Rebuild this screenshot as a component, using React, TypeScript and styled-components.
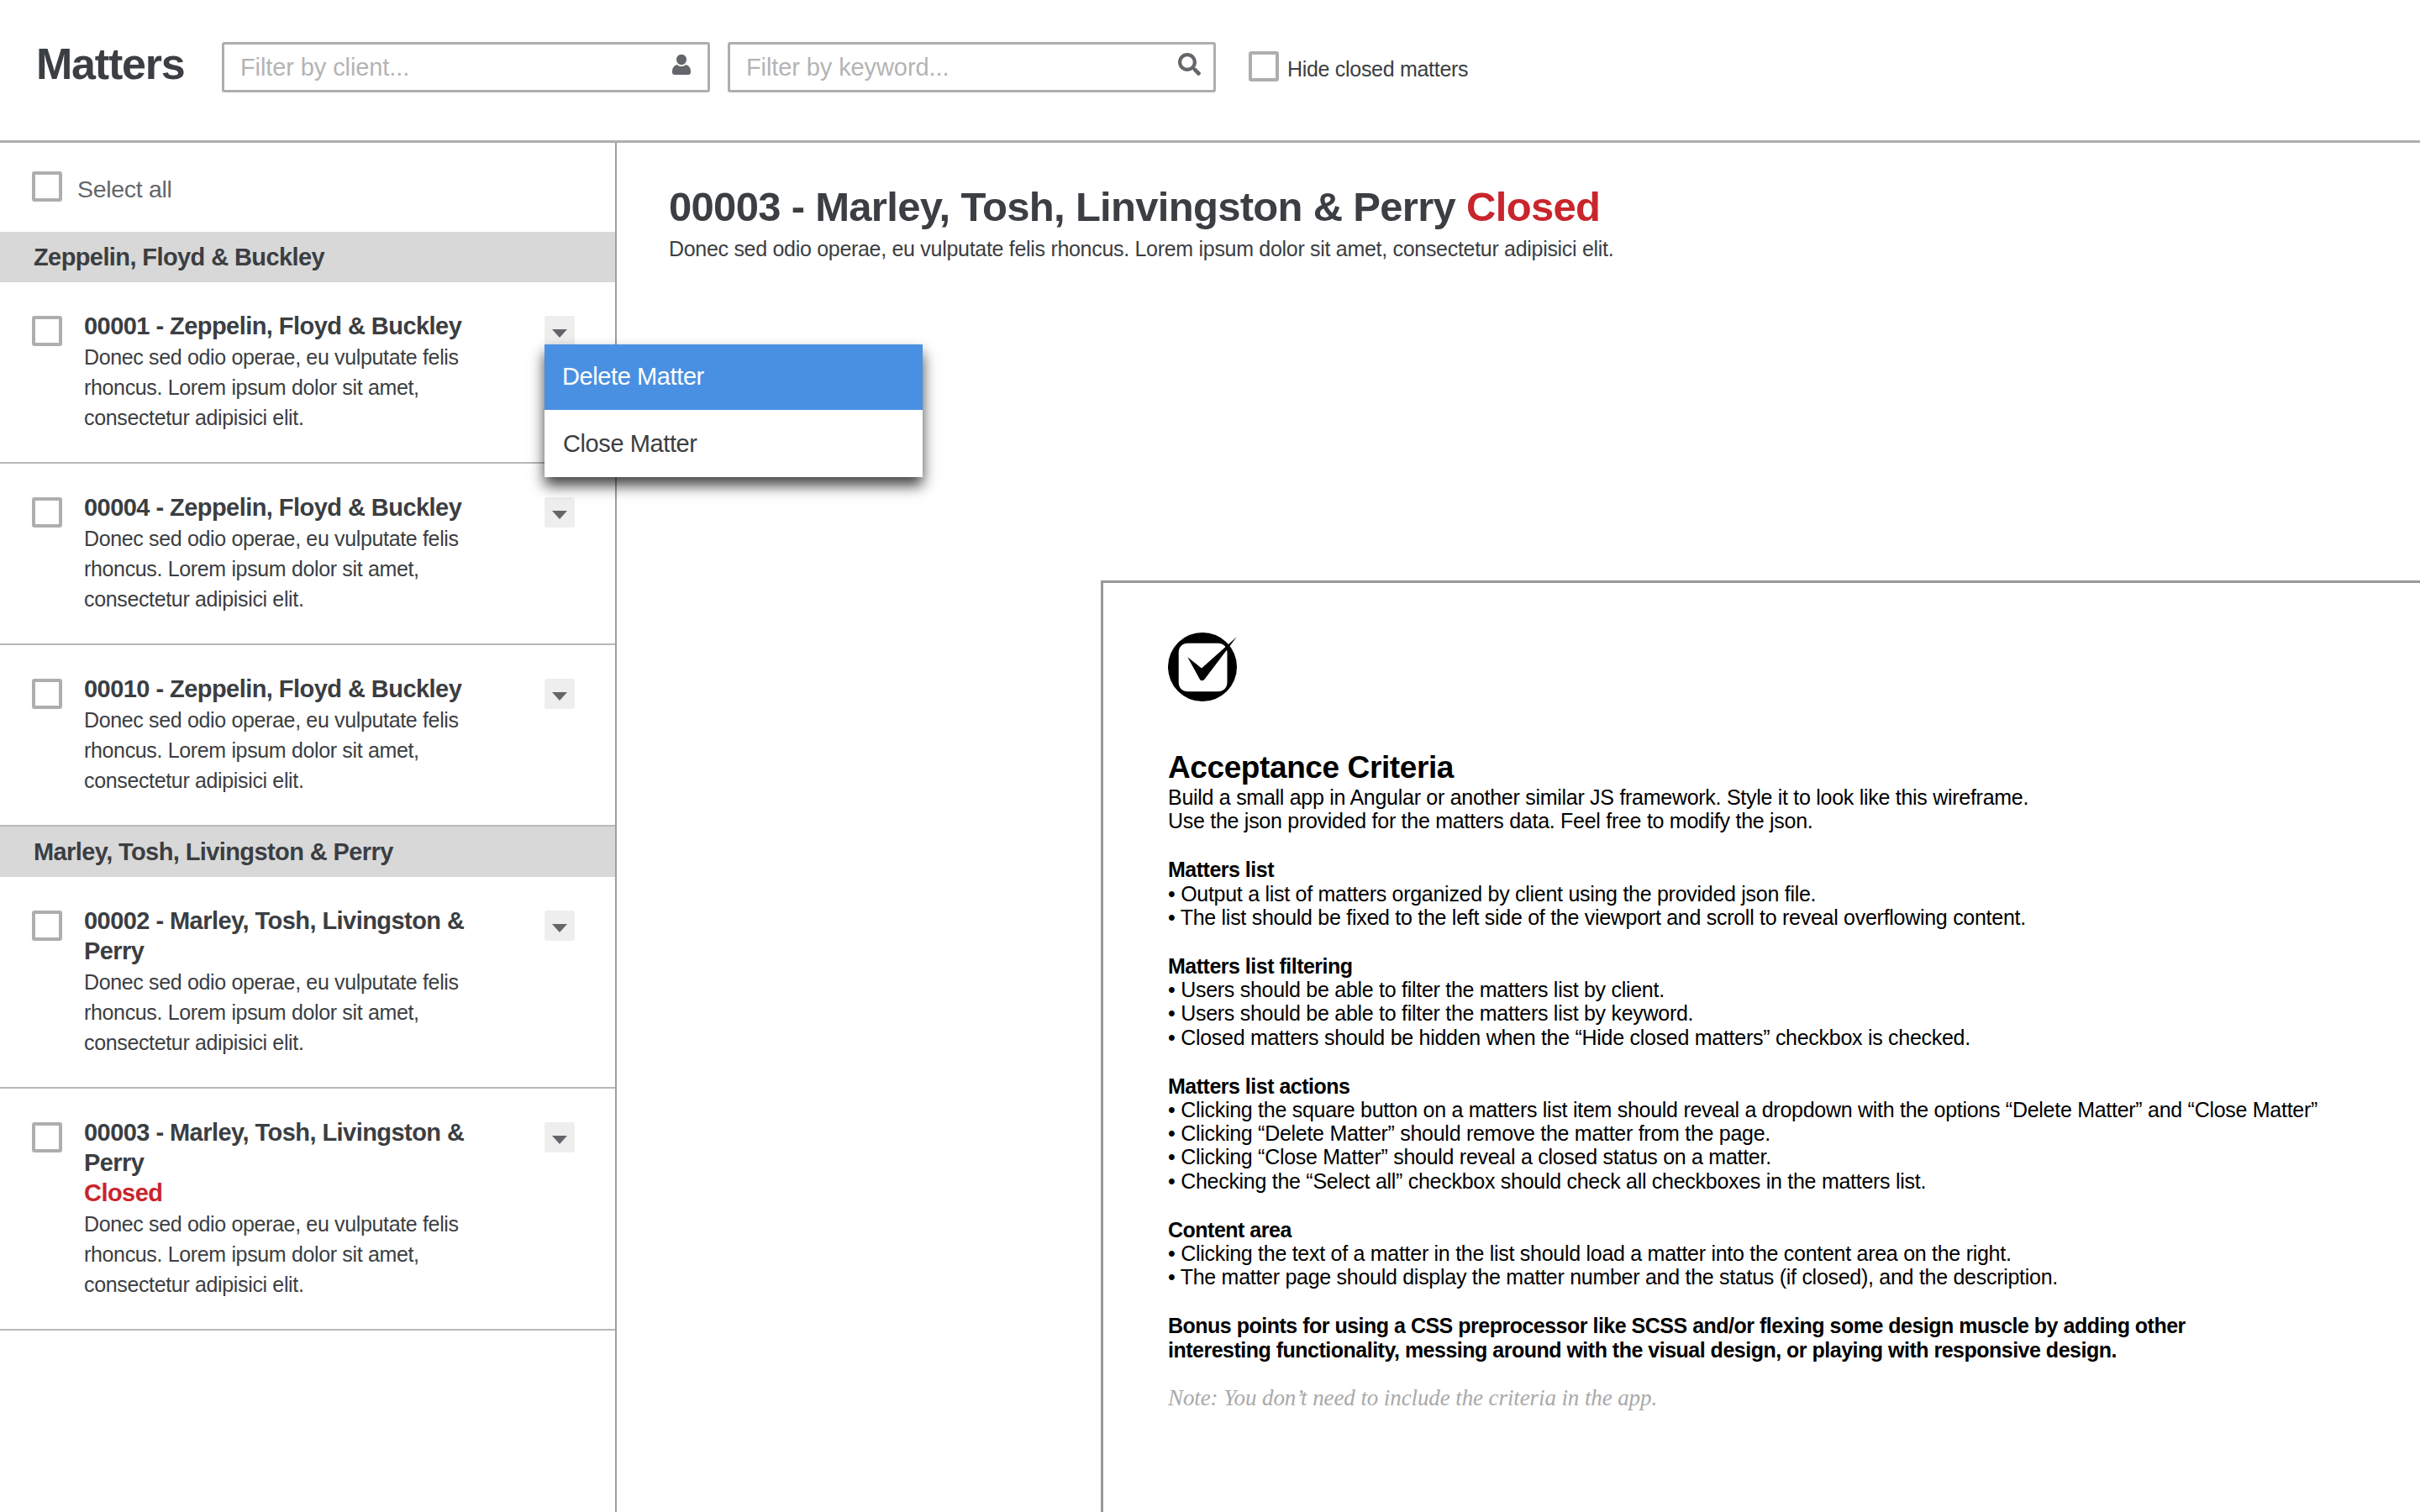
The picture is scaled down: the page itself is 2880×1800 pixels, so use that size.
import { createGlobalStyle } from "styled-components";
import styled from "styled-components";
import { FaSearch } from "react-icons/fa";

const GlobalStyle = createGlobalStyle`
  html, body { margin: 0; padding: 0; background: #fff; }
  body { font-family: "Liberation Sans", Arial, sans-serif; color: #3b3e42; }
  * { box-sizing: border-box; }
`;

type Matter = { id: string; name: string; closed?: boolean };
type Group = { client: string; matters: Matter[] };

const GROUPS: Group[] = [
  {
    client: "Zeppelin, Floyd & Buckley",
    matters: [
      { id: "00001", name: "Zeppelin, Floyd & Buckley" },
      { id: "00004", name: "Zeppelin, Floyd & Buckley" },
      { id: "00010", name: "Zeppelin, Floyd & Buckley" },
    ],
  },
  {
    client: "Marley, Tosh, Livingston & Perry",
    matters: [
      { id: "00002", name: "Marley, Tosh, Livingston & Perry" },
      { id: "00003", name: "Marley, Tosh, Livingston & Perry", closed: true },
    ],
  },
];

const CRITERIA = [
  {
    title: "Matters list",
    lines: [
      "• Output a list of matters organized by client using the provided json file.",
      "• The list should be fixed to the left side of the viewport and scroll to reveal overflowing content.",
    ],
  },
  {
    title: "Matters list filtering",
    lines: [
      "• Users should be able to filter the matters list by client.",
      "• Users should be able to filter the matters list by keyword.",
      "• Closed matters should be hidden when the “Hide closed matters” checkbox is checked.",
    ],
  },
  {
    title: "Matters list actions",
    lines: [
      "• Clicking the square button on a matters list item should reveal a dropdown with the options “Delete Matter” and “Close Matter”",
      "• Clicking “Delete Matter” should remove the matter from the page.",
      "• Clicking “Close Matter” should reveal a closed status on a matter.",
      "• Checking the “Select all” checkbox should check all checkboxes in the matters list.",
    ],
  },
  {
    title: "Content area",
    lines: [
      "• Clicking the text of a matter in the list should load a matter into the content area on the right.",
      "• The matter page should display the matter number and the status (if closed), and the description.",
    ],
  },
];

const Page = styled.div`
  width: 2880px;
  height: 1800px;
  overflow: hidden;
  display: flex;
  flex-direction: column;
`;

const Toolbar = styled.header`
  height: 170px;
  flex: none;
  display: flex;
  align-items: center;
  padding: 0 0 0 43px;
  border-bottom: 3px solid #aeaeae;
`;

const PageTitle = styled.h1`
  margin: 0 45px 16px 0;
  width: 176px;
  font-size: 52px;
  font-weight: 700;
  letter-spacing: -1.2px;
  white-space: nowrap;
`;

const FilterBox = styled.div`
  width: 581px;
  height: 60px;
  margin-right: 21px;
  margin-bottom: 8px;
  padding: 0 15px 0 19px;
  display: flex;
  align-items: center;
  justify-content: space-between;
  border: 3px solid #aeaeae;
  border-radius: 3px;
`;

const FilterText = styled.span`
  padding-top: 2px;
  font-size: 29px;
  letter-spacing: -0.1px;
  color: #b4b4b4;
`;

const IconSlot = styled.span<{ $inset?: number }>`
  display: flex;
  margin-bottom: 6px;
  margin-right: ${(p) => p.$inset ?? 0}px;
  color: #63666a;
`;

const Check = styled.span`
  flex: none;
  display: block;
  width: 36px;
  height: 36px;
  border: 4px solid #aeaeae;
  border-radius: 3px;
  background: #fff;
`;

const HideLabel = styled.label`
  margin: 0 0 10px 18px;
  display: flex;
  align-items: center;
  gap: 10px;
  font-size: 25px;
  letter-spacing: -0.3px;
`;

const HideText = styled.span`
  margin-top: 7px;
`;

const Body = styled.div`
  flex: 1;
  min-height: 0;
  display: flex;
`;

const Sidebar = styled.aside`
  width: 734px;
  flex: none;
  border-right: 2px solid #9e9e9e;
`;

const SelectAll = styled.label`
  height: 106px;
  padding: 0 0 2px 38px;
  display: flex;
  align-items: center;
  gap: 18px;
  font-size: 28.5px;
  letter-spacing: -0.3px;
  color: #63666a;
`;

const SelectText = styled.span`
  margin-top: 6px;
`;

const GroupHeader = styled.h2`
  height: 60px;
  margin: 0;
  padding: 0 0 0 40px;
  display: flex;
  align-items: center;
  background: #d8d8d8;
  font-size: 29px;
  font-weight: 700;
  letter-spacing: -0.6px;
`;

const Item = styled.article`
  position: relative;
  display: flex;
  padding: 34px 0 35px 38px;
  border-bottom: 2px solid #b8b8b8;
`;

const ItemCheck = styled(Check)`
  margin-top: 6px;
`;

const ItemText = styled.div`
  width: 490px;
  margin-left: 26px;
`;

const ItemTitle = styled.div`
  font-size: 29px;
  line-height: 36px;
  font-weight: 700;
  letter-spacing: -0.55px;
`;

const Closed = styled.span`
  color: #c9252c;
`;

const ClosedLine = styled(Closed)`
  display: block;
`;

const ItemDesc = styled.p`
  margin: 0;
  padding-top: 1px;
  font-size: 25px;
  line-height: 36px;
  letter-spacing: -0.35px;
`;

const MenuButton = styled.span`
  flex: none;
  width: 36px;
  height: 36px;
  margin: 6px 0 0 58px;
  display: flex;
  align-items: center;
  justify-content: center;
  background: #eee;
  border-radius: 3px;
  &::after {
    content: "";
    margin-top: 6px;
    border-style: solid;
    border-width: 10px 9px 0;
    border-color: #63666a transparent transparent;
  }
`;

const Dropdown = styled.div`
  position: absolute;
  z-index: 2;
  top: 74px;
  left: 648px;
  width: 450px;
  background: #fff;
  box-shadow: 0 10px 16px rgba(0, 0, 0, 0.75);
`;

const DropdownItem = styled.div<{ $active?: boolean }>`
  height: ${(p) => (p.$active ? "78px" : "80px")};
  padding: ${(p) => (p.$active ? "0 0 2px 21px" : "0 0 0 22px")};
  display: flex;
  align-items: center;
  font-size: 29px;
  letter-spacing: -0.4px;
  background: ${(p) => (p.$active ? "#4a90e2" : "#fff")};
  color: ${(p) => (p.$active ? "#fff" : "#3b3e42")};
`;

const Main = styled.main`
  flex: 1;
  min-width: 0;
  display: flex;
  flex-direction: column;
  padding-top: 46px;
`;

const MatterHead = styled.div`
  padding-left: 62px;
  height: 475px;
`;

const MatterTitle = styled.h2`
  margin: 0;
  font-size: 49px;
  line-height: 60px;
  font-weight: 700;
  letter-spacing: -0.7px;
  white-space: nowrap;
`;

const MatterDesc = styled.p`
  margin: 3px 0 0;
  font-size: 25px;
  line-height: 34px;
  letter-spacing: -0.3px;
  white-space: nowrap;
`;

const Brief = styled.section`
  flex: 1;
  margin-left: 576px;
  padding: 59px 0 0 77px;
  border-top: 3px solid #999;
  border-left: 3px solid #999;
  color: #000;
`;

const Logo = styled.svg`
  display: block;
  width: 84px;
  height: 84px;
`;

const BriefTitle = styled.h3`
  margin: 56px 0 0;
  font-size: 37px;
  line-height: 42px;
  font-weight: 700;
  letter-spacing: -0.4px;
`;

const BriefLine = styled.div`
  font-size: 25px;
  line-height: 28.2px;
  letter-spacing: -0.28px;
  white-space: nowrap;
`;

const BriefBlock = styled.div`
  margin-bottom: 30px;
`;

const BonusBlock = styled.div`
  margin-bottom: 26px;
`;

const BriefStrong = styled(BriefLine)`
  font-weight: 700;
  letter-spacing: -0.5px;
`;

const BriefNote = styled.div`
  font-family: "Liberation Serif", "Times New Roman", serif;
  font-style: italic;
  font-size: 27px;
  line-height: 34px;
  letter-spacing: -0.1px;
  color: #a9a9a9;
`;

const UserIcon = () => (
  <svg width="22" height="24" viewBox="0 0 22 24" fill="currentColor" aria-hidden="true">
    <ellipse cx="11" cy="6" rx="6" ry="6.2" />
    <path d="M0 20c0-4 2-7 6-8 1 1.5 3 2 5 2s4-.5 5-2c4 1 6 4 6 8v1c0 2-1 3-3 3H3c-2 0-3-1-3-3z" />
  </svg>
);

const LogoMark = () => (
  <Logo viewBox="0 0 84 84" aria-hidden="true">
    <path
      fillRule="evenodd"
      d="M41 0a41 41 0 1 0 0 82a41 41 0 1 0 0-82zM24 12.7H59C66 12.7 70.5 17 70.5 24V59C70.5 66 66 70.3 59 70.3H24C17 70.3 12.7 66 12.7 59V24C12.7 17 17 12.7 24 12.7z"
    />
    <path d="M23.3 29.3L40 42.5 81.7 5.3 44 55C42 58 38.5 58 37.5 55z" />
  </Logo>
);

const MatterRow = ({ matter, open }: { matter: Matter; open?: boolean }) => (
  <Item>
    <ItemCheck />
    <ItemText>
      <ItemTitle>
        {`${matter.id} - ${matter.name}`}
        {matter.closed && <ClosedLine>Closed</ClosedLine>}
      </ItemTitle>
      <ItemDesc>
        Donec sed odio operae, eu vulputate felis rhoncus. Lorem ipsum dolor sit amet, consectetur adipisici elit.
      </ItemDesc>
    </ItemText>
    <MenuButton />
    {open && (
      <Dropdown>
        <DropdownItem $active>Delete Matter</DropdownItem>
        <DropdownItem>Close Matter</DropdownItem>
      </Dropdown>
    )}
  </Item>
);

export default function App() {
  return (
    <Page>
      <GlobalStyle />
      <Toolbar>
        <PageTitle>Matters</PageTitle>
        <FilterBox>
          <FilterText>Filter by client...</FilterText>
          <IconSlot $inset={5}><UserIcon /></IconSlot>
        </FilterBox>
        <FilterBox>
          <FilterText>Filter by keyword...</FilterText>
          <IconSlot><FaSearch size={27} /></IconSlot>
        </FilterBox>
        <HideLabel><Check /><HideText>Hide closed matters</HideText></HideLabel>
      </Toolbar>
      <Body>
        <Sidebar>
          <SelectAll><Check /><SelectText>Select all</SelectText></SelectAll>
          {GROUPS.map((group) => (
            <div key={group.client}>
              <GroupHeader>{group.client}</GroupHeader>
              {group.matters.map((matter) => (
                <MatterRow key={matter.id} matter={matter} open={matter.id === "00001"} />
              ))}
            </div>
          ))}
        </Sidebar>
        <Main>
          <MatterHead>
            <MatterTitle>00003 - Marley, Tosh, Linvingston &amp; Perry <Closed>Closed</Closed></MatterTitle>
            <MatterDesc>Donec sed odio operae, eu vulputate felis rhoncus. Lorem ipsum dolor sit amet, consectetur adipisici elit.</MatterDesc>
          </MatterHead>
          <Brief>
            <LogoMark />
            <BriefTitle>Acceptance Criteria</BriefTitle>
            <BriefBlock>
              <BriefLine>Build a small app in Angular or another similar JS framework. Style it to look like this wireframe.</BriefLine>
              <BriefLine>Use the json provided for the matters data. Feel free to modify the json.</BriefLine>
            </BriefBlock>
            {CRITERIA.map((block) => (
              <BriefBlock key={block.title}>
                <BriefStrong>{block.title}</BriefStrong>
                {block.lines.map((line) => <BriefLine key={line}>{line}</BriefLine>)}
              </BriefBlock>
            ))}
            <BonusBlock>
              <BriefStrong>Bonus points for using a CSS preprocessor like SCSS and/or flexing some design muscle by adding other</BriefStrong>
              <BriefStrong>interesting functionality, messing around with the visual design, or playing with responsive design.</BriefStrong>
            </BonusBlock>
            <BriefNote>Note: You don’t need to include the criteria in the app.</BriefNote>
          </Brief>
        </Main>
      </Body>
    </Page>
  );
}
